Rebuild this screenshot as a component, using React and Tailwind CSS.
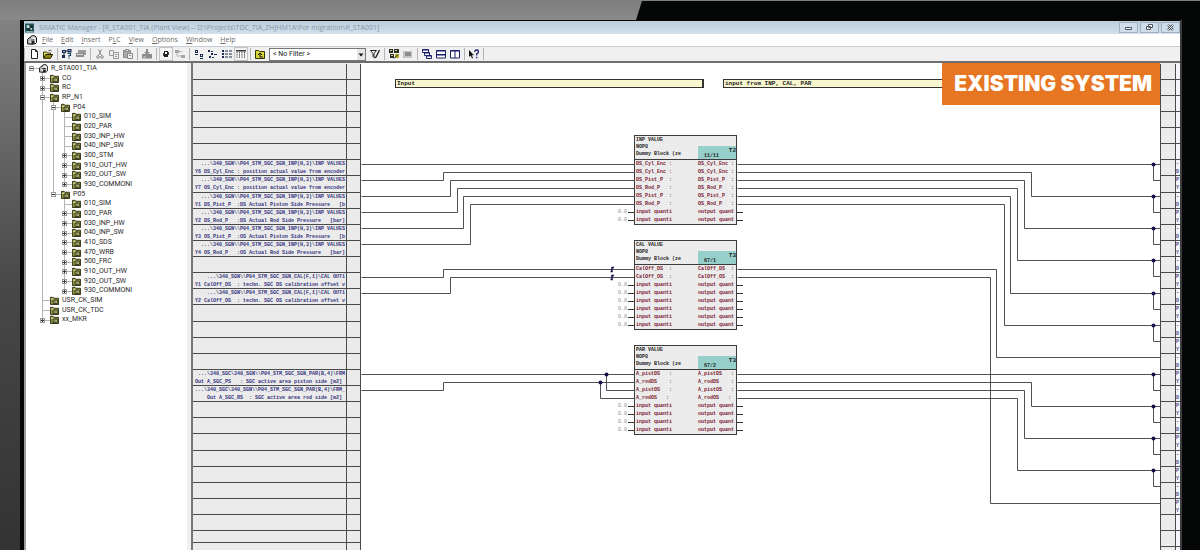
import React from "react";

const MONO = "font-['Liberation_Mono',monospace]";

/* ---------- toolbar icons (10 x 10 grid) ---------- */

const ICONS = {
  newDoc: (
    <path d="M2.5 .5h4l2 2v7h-6zM6.5 .5v2h2" fill="#fff" stroke="#222" />
  ),
  open: (
    <g>
      <path d="M.5 9V3h3l1 1h3v2" fill="#e8e070" stroke="#3a3a00" />
      <path d="M.7 9.3 2.6 5.5h7L7.5 9.3z" fill="#8a8a10" stroke="#222200" />
      <path d="M5.5 1.8q2-1.6 3 .6" fill="none" stroke="#222" strokeWidth=".8" />
    </g>
  ),
  nodes: (
    <g>
      <path d="M0 1h4v3H0zM5.5 0h4v3.5h-4zM0 6h3v3H0z" fill="#1b2b55" />
      <path d="M2 4v2M4 2h2" stroke="#222" />
      <path d="M5.5 4.5h3v2H7v1.300M7 8.500v1.300" stroke="#1c4a6a" fill="none" strokeWidth="1.200" />
      <path d="M1 2h2v1H1zM6.500 1h2v1h-2z" fill="#9ab0d0" />
    </g>
  ),
  printer: (
    <g fill="#9b9b9b">
      <path d="M2 1h8v3H2z" />
      <path d="M0 4h8v4H0z" fill="#8a8a8a" />
      <path d="M1 5h6v1H1z" fill="#ddd" />
      <path d="M8 4h2v2H8z" />
    </g>
  ),
  cut: (
    <g fill="none" stroke="#8c8c8c">
      <path d="M3.500 .5 6.500 6.500M6.500 .5 3.500 6.500" />
      <circle cx="3" cy="8" r="1.300" />
      <circle cx="7" cy="8" r="1.300" />
    </g>
  ),
  copy: (
    <g fill="#eee" stroke="#999">
      <path d="M.5 1.500h4v5h-4z" />
      <path d="M4.500 3.500h5v6h-5zM6 5.500h2M6 7.500h2" />
    </g>
  ),
  paste: (
    <g stroke="#888">
      <path d="M.5 1.500h7v7h-7z" fill="#aaa" />
      <path d="M2.500 .5h3v2h-3z" fill="#ddd" />
      <path d="M4.500 4.500h5v5h-5zM6 6.500h2" fill="#eee" />
    </g>
  ),
  download: (
    <g fill="#8d8d8d">
      <path d="M0 5h10v4.500H0z" />
      <path d="M4 0h2v3h2L5 6 2 3h2z" />
      <path d="M1.500 7.500h2v1h-2z" fill="#eee" />
    </g>
  ),
  online: (
    <g>
      <path d="M3 2h4v6H3z" fill="#222" />
      <path d="M4 3h2v2H4z" fill="#fff" />
      <path d="M2 4h1v3H2zM7 3h1v3H7z" fill="#444" />
    </g>
  ),
  offline: (
    <g fill="#a5a5a5">
      <path d="M0 1h4v3H0zM6 6h4v3H6z" />
      <path d="M2 4v3h4M4 2.500h3" fill="none" stroke="#b5b5b5" />
    </g>
  ),
  large: (
    <g fill="#1c2a50">
      <path d="M1 1h3v3H1zM6 5h3v3H6z" />
      <path d="M1 5h3v1H1zM6 9h3v1H6z" />
      <path d="M2 2h1v1H2zM7 6h1v1H7z" fill="#fff" />
    </g>
  ),
  small: (
    <g fill="#1c2a50">
      <path d="M0 1h2v2H0zM3 4h2v2H3zM1 7h2v2H1z" />
      <path d="M3 2h2v1H3zM6 5h3v1H6zM4 8h2v1H4z" />
    </g>
  ),
  list: (
    <path
      d="M0 1h2v2H0zM3 1.500h3v1H3zM7 1.500h3v1H7zM0 4h2v2H0zM3 4.500h3v1H3zM7 4.500h3v1H7zM0 7h2v2H0zM3 7.500h3v1H3zM7 7.500h3v1H7z"
      fill="#1c2a50"
    />
  ),
  details: (
    <g>
      <path d="M0 1h10v1.500H0z" fill="#333" />
      <path d="M1 3v6.500M3.500 3v6.500M6 3v6.500M8.500 3v6.500" stroke="#555" strokeDasharray="1.500 .7" />
    </g>
  ),
  up: (
    <g>
      <path d="M.5 9.500v-8h3l1 1h5v7z" fill="#d8d43c" stroke="#333300" />
      <path d="M5 8V4.500M3 6l2-2 2 2M5 8h3" fill="none" stroke="#111" />
    </g>
  ),
  filter: (
    <g fill="none" stroke="#222">
      <path d="M.5 1.500h6l-2.500 3v4l-1-1v-3z" />
      <path d="M9.500 1 6 8l-1.500 1" strokeWidth="1.300" />
    </g>
  ),
  modules: (
    <g>
      <path d="M0 0h4v4H0zM5 0h5v4H5zM1 5h4v4H1z" fill="#2a2e20" />
      <path d="M1 1h2v1H1zM6 1h2v1H6zM2 6h2v1H2z" fill="#cfd0a0" />
      <path d="M6 5h4v4H6z" fill="#b8ae20" />
      <path d="M5 9.500l4-4" stroke="#222" />
    </g>
  ),
  chip: (
    <g>
      <path d="M0 2h9v7H0z" fill="#c4c4c4" />
      <path d="M2 3h6v4H2z" fill="#8d8d8d" />
    </g>
  ),
  cascade: (
    <g fill="#fff" stroke="#1a1f6a">
      <path d="M.5 .5h6v3h-6z" />
      <path d="M2.500 3.500h5v3h-5z" />
      <path d="M4.500 6.500h5v3h-5z" />
      <path d="M.5 1h6M2.500 4h5M4.500 7h5" />
    </g>
  ),
  tileH: (
    <path d="M.5 1.500h9v7.500h-9zM.5 5.500h9M.5 2h9M.5 6h9" fill="#fff" stroke="#1a1f6a" />
  ),
  tileV: (
    <path d="M.5 1.500h9v7.500h-9zM5 1.500V9M.5 2h9" fill="#fff" stroke="#1a1f6a" />
  ),
  help: (
    <g>
      <path d="M0 1v7l1.700-1.500L3 9.500l1-.5-1.200-2.700H5z" fill="#111" />
      <path d="M5.800 3q0-2 1.900-2 1.800 0 1.800 1.700 0 1.200-1.800 2.200v1.500M7.700 7.800v1.500" fill="none" stroke="#1a1f6a" strokeWidth="1.300" />
    </g>
  ),
  station: (
    <g>
      <path d="M.6 9V4.500L2.500 2.500H6V9z" fill="#bbb" stroke="#111" />
      <path d="M3 3.500 4.500 .8h3.500L9.500 3v4.500L8 9H3" fill="#e4e4e4" stroke="#111" />
      <path d="M3.500 4.500h4v1h-4zM4.500 6h3v3h-3z" fill="#222" />
    </g>
  ),
  folder: (
    <g>
      <path d="M.5 9.500v-8h3l1 1h5v7z" fill="#8f9440" stroke="#25280c" />
      <path d="M1 3h3v1H1z" fill="#f1f0b8" />
      <path d="M3.500 4.500h4.500v4h-4.500z" fill="#e6e7a8" stroke="#1f220a" />
      <path d="M5.500 5v3" stroke="#1f220a" />
    </g>
  ),
  app: (
    <g>
      <path d="M0 0h10v10H0z" fill="#2f5b60" />
      <path d="M1 6 5 1l4 1v6l-4 1z" fill="#163034" />
      <path d="M2 2h3v3H2zM6 5h2v2H6z" fill="#bfe3dd" />
      <path d="M1 9h8" stroke="#8fd0c0" />
    </g>
  ),
};

function Icon({ name, className = "h-[10px] w-[10px]" }) {
  return (
    <svg viewBox="0 0 10 10" className={`block shrink-0 ${className}`} aria-hidden="true">
      {ICONS[name]}
    </svg>
  );
}

function Tool({ icon, label, pressed }) {
  return (
    <button
      type="button"
      aria-label={label}
      className={`block h-[10px] w-[10px] shrink-0 ${pressed ? "bg-[#f8f8f8] outline outline-offset-1 outline-[#c4c4c4]" : ""}`}
    >
      <Icon name={icon} />
    </button>
  );
}

const Sep = () => <span className="h-3 w-px shrink-0 bg-[#b4b4b4]" />;

/* ---------- window chrome ---------- */

function WindowButton({ label, children }) {
  return (
    <button
      type="button"
      aria-label={label}
      className="flex h-[11px] w-[19px] items-center justify-center border border-[#9fb0c0] bg-[#cfdcea]"
    >
      <svg viewBox="0 0 9 7" className="h-[7px] w-[9px]" fill="#fff" stroke="#4c5560">
        {children}
      </svg>
    </button>
  );
}

function TitleBar() {
  return (
    <header className="flex h-[13px] shrink-0 items-center gap-[5px] bg-linear-to-b from-[#bccddc] to-[#d3e0ec] pl-px">
      <Icon name="app" className="h-[10px] w-[9px]" />
      <h1 className="grow whitespace-nowrap text-[7px] leading-[12px] text-[#8796a4]">
        SIMATIC Manager - [R_STA001_TIA (Plant View) -- D:\Projects\TDC_TIA_ZHJHM1A\For migration\R_STA001]
      </h1>
      <div className="flex gap-[2px]">
        <WindowButton label="Minimize">
          <path d="M1.500 3.500h6v2h-6z" />
        </WindowButton>
        <WindowButton label="Restore">
          <path d="M3.500 .5h4v3h-4zM1.500 2.500h4v3h-4z" />
        </WindowButton>
        <WindowButton label="Close">
          <path d="M2 1l5 5M7 1 2 6" strokeWidth="2.400" />
          <path d="M2 1l5 5M7 1 2 6" stroke="#fff" strokeWidth=".8" />
        </WindowButton>
      </div>
    </header>
  );
}

const MENU = [
  ["", "F", "ile"],
  ["", "E", "dit"],
  ["", "I", "nsert"],
  ["P", "L", "C"],
  ["", "V", "iew"],
  ["", "O", "ptions"],
  ["", "W", "indow"],
  ["", "H", "elp"],
];

function MenuBar() {
  return (
    <nav className="flex h-3 shrink-0 items-center gap-2 bg-white pl-[3px] text-[7px] leading-[12px] text-[#6a6a6a]">
      <Icon name="station" className="-mr-[3px] h-[10px] w-[10px]" />
      {MENU.map(([before, key, after]) => (
        <button key={key} type="button" className="block">
          {before}
          <span className="underline">{key}</span>
          {after}
        </button>
      ))}
    </nav>
  );
}

function Toolbar() {
  return (
    <div className="flex h-[17px] shrink-0 items-center border-t border-b-2 border-t-[#c3cdd3] border-b-[#6e6e6e] bg-[#f0f0f0]">
      <div className="flex items-center gap-1">
        <Sep />
        <Tool icon="newDoc" label="New" />
        <Tool icon="open" label="Open" />
        <Sep />
        <Tool icon="nodes" label="Accessible nodes" />
        <Tool icon="printer" label="Memory card" />
        <Sep />
        <Tool icon="cut" label="Cut" />
        <Tool icon="copy" label="Copy" />
        <Tool icon="paste" label="Paste" />
        <Sep />
        <Tool icon="download" label="Download" />
        <Sep />
        <Tool icon="online" label="Online" pressed />
        <Tool icon="offline" label="Offline" />
        <Sep />
        <Tool icon="large" label="Large icons" />
        <Tool icon="small" label="Small icons" />
        <Tool icon="list" label="List" />
        <Tool icon="details" label="Details" pressed />
        <Sep />
        <Tool icon="up" label="Up one level" />
      </div>
      <div className="relative ml-1 h-[13px] w-[97px]">
        <select
          aria-label="Filter"
          className="block h-full w-full appearance-none border border-[#777] bg-white pl-[3px] font-[Roboto,sans-serif] text-[7px] leading-[10px] text-[#222]"
        >
          <option>&lt; No Filter &gt;</option>
        </select>
        <svg viewBox="0 0 8 11" className="pointer-events-none absolute top-px right-px h-[11px] w-2">
          <path d="M0 0h8v11H0z" fill="#e6e6e6" />
          <path d="M1.500 4.500h5L4 7.500z" fill="#111" />
        </svg>
      </div>
      <div className="flex items-center gap-1 pl-1">
        <Tool icon="filter" label="Edit filter" />
        <Sep />
        <Tool icon="modules" label="Configure network" />
        <Tool icon="chip" label="Simulate modules" />
        <Sep />
        <Tool icon="cascade" label="Cascade" />
        <Tool icon="tileH" label="Tile horizontally" />
        <Tool icon="tileV" label="Tile vertically" />
        <Sep />
        <Tool icon="help" label="Context help" />
        <Sep />
      </div>
    </div>
  );
}

/* ---------- project tree ---------- */

const leaf = (name) => ({ name });
const closed = (name) => ({ name, state: "+" });
const opened = (name, children) => ({ name, state: "-", children });

const PROJECT = opened("R_STA001_TIA", [
  closed("CO"),
  closed("RC"),
  opened("RP_N1", [
    opened("P04", [
      leaf("010_SIM"),
      leaf("020_PAR"),
      leaf("030_INP_HW"),
      leaf("040_INP_SW"),
      closed("300_STM"),
      closed("910_OUT_HW"),
      closed("920_OUT_SW"),
      closed("930_COMMONI"),
    ]),
    opened("P05", [
      leaf("010_SIM"),
      closed("020_PAR"),
      closed("030_INP_HW"),
      closed("040_INP_SW"),
      closed("410_SDS"),
      closed("470_WRB"),
      closed("500_FRC"),
      closed("910_OUT_HW"),
      closed("920_OUT_SW"),
      closed("930_COMMONI"),
    ]),
  ]),
  leaf("USR_CK_SIM"),
  leaf("USR_CK_TDC"),
  closed("xx_MKR"),
]);

function flatten(node, trail = [], last = true) {
  const kids = node.children || [];
  const next = [...trail, !last];
  return [
    { name: node.name, state: node.state, trail, last },
    ...kids.flatMap((kid, i) => flatten(kid, next, i === kids.length - 1)),
  ];
}

const TREE_ROWS = flatten(PROJECT);

function TreeRow({ row, index }) {
  const root = row.trail.length === 0;
  return (
    <li className={`flex items-center ${index % 3 === 2 ? "h-[9px]" : "h-[10px]"}`}>
      {row.trail.map((line, i) => (
        <span key={i} className="flex h-full w-[11px] shrink-0 justify-center">
          {line && <span className="w-px bg-[#b5b5b5]" />}
        </span>
      ))}
      <svg viewBox="0 0 13 10" className="h-[10px] w-[13px] shrink-0" shapeRendering="crispEdges">
        {!root && <path d={row.last ? "M5.500 0v5" : "M5.500 0v10"} stroke="#b5b5b5" />}
        <path d="M5 5.500h8" stroke="#b5b5b5" />
        {row.state && (
          <g>
            <path d="M3.500 3.500h4v4h-4z" fill="#fff" stroke="#999" />
            <path d={row.state === "+" ? "M4 5.500h3M5.500 4v3" : "M4 5.500h3"} stroke="#333" />
          </g>
        )}
      </svg>
      <Icon name={root ? "station" : "folder"} className="h-[9px] w-[9px]" />
      <span className="pl-[3px] leading-[9px]">{row.name}</span>
    </li>
  );
}

function ProjectTree() {
  return (
    <aside className="w-[167px] shrink-0 border-l-2 border-r-4 border-l-[#9b9b9b] border-r-[#efefef] bg-white font-[Roboto,sans-serif] text-[7px] text-[#2b2b2b]">
      <ul>
        {TREE_ROWS.map((row, i) => (
          <TreeRow key={i} row={row} index={i} />
        ))}
      </ul>
    </aside>
  );
}

/* ---------- chart margins ---------- */

const inp = "...\\340_SGN\\\\P04_STM_SGC_SGN_INP(H,3)\\INP VALUES";
const cal = "...\\340_SGN\\\\P04_STM_SGC_SGN_CAL(F,1)\\CAL OUT1";

const LEFT_ROWS = {
  6: [inp, "Y6 DS_Cyl_Enc : position actual value from encoder"],
  7: [inp, "Y7 OS_Cyl_Enc : position actual value from encoder"],
  8: [inp, "Y1 DS_Pist_P  :DS Actual Piston Side Pressure   [b"],
  9: [inp, "Y2 DS_Rod_P   :DS Actual Rod Side Pressure   [bar]"],
  10: [inp, "Y3 OS_Pist_P  :OS Actual Piston Side Pressure   [b"],
  11: [inp, "Y4 OS_Rod_P   :OS Actual Rod Side Pressure   [bar]"],
  13: [cal, "Y1 CalOff_DS  : techn. SGC DS calibration offset v"],
  14: [cal, "Y2 CalOff_OS  : techn. SGC OS calibration offset v"],
  19: ["...\\340_SGC\\340_SGN\\\\P04_STM_SGC_SGN_PAR(B,4)\\FRM", "Out A_SGC_PS   : SGC active area piston side [m2] "],
  20: ["...\\340_SGC\\340_SGN\\\\P04_STM_SGC_SGN_PAR(B,4)\\FRM_", "Out A_SGC_RS  : SGC active area rod side [m2] "],
};

const ROWS = Array.from({ length: 31 }, (_, i) => i);
const rowHeight = (i) => (i % 8 === 7 ? "h-[17px]" : "h-4");

function LeftMargin() {
  return (
    <div className={`w-[170px] shrink-0 border-l-2 border-[#777] bg-[#ebebeb] pt-px text-[5px] font-bold text-[#34347c] ${MONO}`}>
      {ROWS.map((i) => (
        <div key={i} className={`flex border-b border-[#4a4a4a] ${i === 29 ? "h-3" : rowHeight(i)}`}>
          <div className="flex w-[154px] flex-col items-end overflow-hidden border-r border-[#4a4a4a] pr-px">
            {(LEFT_ROWS[i] || []).map((line, n) => (
              <span key={n} className="whitespace-pre leading-[8px]">
                {line}
              </span>
            ))}
          </div>
          <div className="grow border-r border-[#4a4a4a]" />
        </div>
      ))}
    </div>
  );
}

const rightText = (i) => {
  if (i < 6 || i > 27) return [];
  return i % 2 ? ["P", "Y"] : ["-", "D"];
};

function RightMargin() {
  return (
    <div className={`w-5 shrink-0 bg-[#ebebeb] pt-px text-[5px] font-bold text-[#4c4c86] ${MONO}`}>
      {ROWS.map((i) => (
        <div key={i} className={`flex border-b border-l border-[#4a4a4a] ${rowHeight(i)}`}>
          <div className="w-[15px] shrink-0 border-r border-[#4a4a4a]" />
          <div className="flex w-1 flex-col bg-[#f4f4fa]">
            {rightText(i).map((mark, n) => (
              <span key={n} className="h-2 leading-[8px]">
                {mark}
              </span>
            ))}
          </div>
        </div>
      ))}
    </div>
  );
}

/* ---------- function chart ---------- */

const LEFT_WIRES = [
  "M361 164H634",
  "M361 180H443V172H634",
  "M361 196H450V180H634",
  "M361 212H457V188H634",
  "M361 228H463V196H634",
  "M361 244H470V204H634",
  "M361 277H443V269H634",
  "M361 293H450V277H634",
  "M361 374H634",
  "M361 390H443V382H634",
  "M606 374V390H634",
  "M600 382V398H634",
];

const RIGHT_WIRES = [
  "M737 164H1160",
  "M737 172H1031V196H1160",
  "M737 180H1024V228H1160",
  "M737 188H1017V260H1160",
  "M737 196H1010V293H1160",
  "M737 204H1004V325H1160",
  "M737 269H996V357H1160",
  "M737 277H990V503H1160",
  "M737 374H1160",
  "M737 382H1031V406H1160",
  "M737 390H1024V438H1160",
  "M737 398H1017V470H1160",
];

const TAPS = [164, 196, 228, 260, 293, 325, 374, 406, 438, 470];

function Wires() {
  return (
    <svg viewBox="361 63 800 487" className="absolute top-0 left-0 h-[487px] w-[800px]">
      <g transform="translate(.5 .5)" fill="none" stroke="#4f4f55">
        {[...LEFT_WIRES, ...RIGHT_WIRES].map((d) => (
          <path key={d} d={d} />
        ))}
        {TAPS.map((y) => (
          <path key={y} d={`M1153 ${y}v16h7`} />
        ))}
        <g fill="#14144a" stroke="none">
          {TAPS.map((y) => (
            <circle key={y} cx="1153" cy={y} r="2" />
          ))}
          <circle cx="606" cy="374" r="2" />
          <circle cx="600" cy="382" r="2" />
        </g>
        <g stroke="#14144a" strokeWidth="1.500">
          <path d="M610 271h1.500v-4h2M610 279h1.500v-4h2" />
        </g>
      </g>
    </svg>
  );
}

const spare = (n) => Array.from({ length: n }, () => ["input quanti", "output quant", true]);
const pin = (name) => [name, name, false];

const BLOCKS = [
  {
    place: "left-[257px] top-[72px]",
    title: "INP VALUE",
    order: "11/11",
    task: "T2",
    pins: [
      pin("DS_Cyl_Enc :"),
      pin("OS_Cyl_Enc :"),
      pin("DS_Pist_P  :"),
      pin("DS_Rod_P   :"),
      pin("OS_Pist_P  :"),
      pin("OS_Rod_P   :"),
      ...spare(2),
    ],
  },
  {
    place: "left-[257px] top-[177px]",
    title: "CAL VALUE",
    order: "67/1",
    task: "T3",
    pins: [pin("CalOff_DS  :"), pin("CalOff_OS  :"), ...spare(6)],
  },
  {
    place: "left-[257px] top-[282px]",
    title: "PAR VALUE",
    order: "67/2",
    task: "T3",
    pins: [pin("A_pistDS   :"), pin("A_rodDS    :"), pin("A_pistOS   :"), pin("A_rodOS   :"), ...spare(4)],
  },
];

function Block({ block }) {
  return (
    <section className={`absolute flex items-end text-[5px] ${MONO} ${block.place}`}>
      <div className="flex w-4 flex-col pb-px text-[#8a8a8a]">
        {block.pins.map(([, , free], i) => (
          <div key={i} className="flex h-2 items-center gap-px">
            {free && <span className="leading-[8px]">0.0</span>}
            {free && <span className="h-px grow bg-[#333]" />}
          </div>
        ))}
      </div>
      <div className="w-[103px] border border-[#3c3c3c] bg-[#ececec] font-bold">
        <div className="flex h-6 items-end justify-between border-b border-[#3c3c3c] text-[#1c1c1c]">
          <div className="flex h-full flex-col whitespace-pre pt-px pl-px leading-[7px]">
            <h2>{block.title}</h2>
            <span>NOP8</span>
            <span>Dummy Block (ze</span>
          </div>
          <div className="flex h-[13px] w-[38px] flex-col bg-[#97cfcb] pt-[2px] text-[6px]">
            <span className="text-right leading-[6px]">{block.task}</span>
            <span className="pl-[6px] text-[5px] leading-[5px]">{block.order}</span>
          </div>
        </div>
        {block.pins.map(([left, right], i) => (
          <div key={i} className="flex h-2 justify-between whitespace-pre pl-px leading-[8px] text-[#7c2030]">
            <span>{left}</span>
            <span className="w-[38px]">{right}</span>
          </div>
        ))}
      </div>
      <div className="flex w-[6px] flex-col pb-px">
        {block.pins.map(([, , free], i) => (
          <div key={i} className="flex h-2 items-center">
            {free && <span className="h-px grow bg-[#333]" />}
          </div>
        ))}
      </div>
    </section>
  );
}

function Note({ place, children }) {
  return (
    <p
      className={`absolute top-4 h-[9px] w-[309px] border border-r-2 border-[#333] bg-[#f8f6cf] pl-px text-[6px] leading-[7px] font-bold text-[#222] ${MONO} ${place}`}
    >
      {children}
    </p>
  );
}

function Chart() {
  return (
    <main className="relative min-w-0 grow overflow-hidden bg-white">
      <Wires />
      <Note place="left-[34px]">Input</Note>
      <Note place="left-[362px]">input from INP, CAL, PAR</Note>
      {BLOCKS.map((block) => (
        <Block key={block.title} block={block} />
      ))}
      <div className="absolute top-0 right-0 bg-[#e77623] py-[7px] pr-2 pl-3 font-[Inter,sans-serif] text-[21px] leading-[28px] font-black whitespace-nowrap text-white">
        EXISTING SYSTEM
      </div>
    </main>
  );
}

export default function App() {
  return (
    <div className="flex h-screen flex-col overflow-hidden bg-[#050606] font-['Open_Sans',sans-serif]">
      <div className="h-5 shrink-0 border-t border-[#7d827e]">
        <div className="h-full w-[53.500%] bg-linear-to-b from-[#7c7d7c] to-[#898a89] [clip-path:polygon(0_0,100%_0,calc(100%_-_6px)_100%,0_100%)]" />
      </div>
      <div className="flex min-h-0 grow">
        <div className="w-5 shrink-0 bg-linear-to-b from-[#828282] via-[#484848] to-[#333]" />
        <div className="ml-1 flex min-w-0 grow flex-col pt-px">
          <TitleBar />
          <MenuBar />
          <Toolbar />
          <div className="flex min-h-0 grow">
            <ProjectTree />
            <LeftMargin />
            <Chart />
            <RightMargin />
          </div>
        </div>
        <div className="w-5 shrink-0 border-l-2 border-[#3a3c3d] bg-[#050606]" />
      </div>
    </div>
  );
}
